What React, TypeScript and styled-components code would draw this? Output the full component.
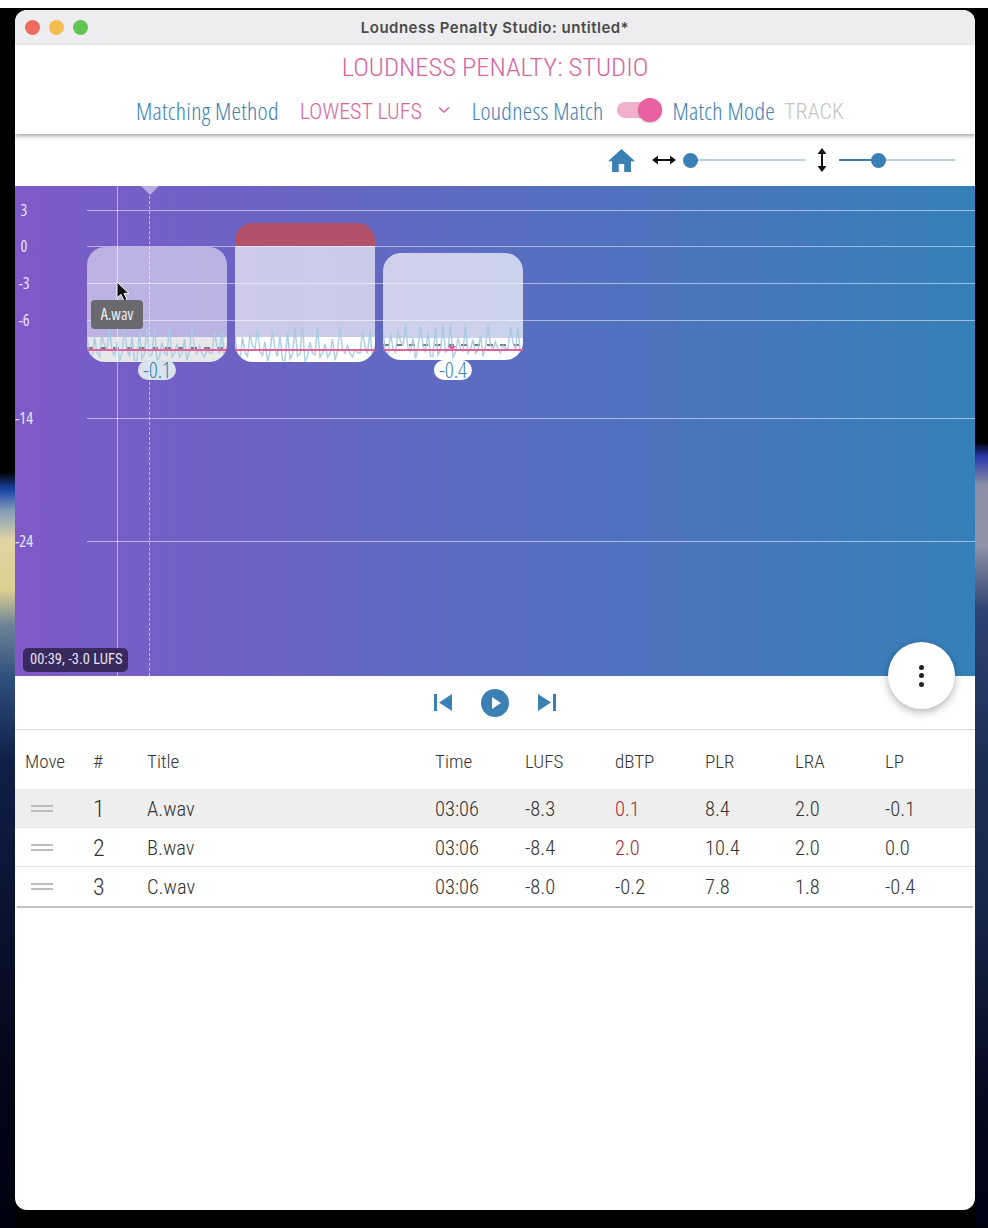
import styled, { createGlobalStyle } from "styled-components";

const BLUE = "#3a80b5";
const PINK = "#d9659f";
const NARROW = `"Roboto Condensed", "Open Sans", sans-serif`;

const GlobalStyle = createGlobalStyle`
  html, body { margin: 0; padding: 0; background: #010210; }
  #root { width: 988px; height: 1228px; overflow: hidden; }
`;

const Desktop = styled.div`
  position: relative;
  width: 988px;
  height: 1228px;
  box-sizing: border-box;
  padding: 10px 13px 18px 15px;
  background-color: #000;
  background-repeat: no-repeat;
  background-size: 15px 100%, 13px 100%;
  background-position: left top, right top;
  background-image: linear-gradient(
      180deg,
      #000 0,
      #000 472px,
      #1c45a8 490px,
      #7f9ab8 510px,
      #e0d4a4 540px,
      #dccf90 590px,
      #6d8398 625px,
      #2d4e7c 680px,
      #101f48 760px,
      #0a1332 900px,
      #030514 1100px,
      #010210 1228px
    ),
    linear-gradient(
      180deg,
      #000 0,
      #000 442px,
      #2636a6 456px,
      #8b8ea6 485px,
      #8f94a8 545px,
      #2e4272 610px,
      #1c2d55 760px,
      #17264c 900px,
      #060b22 1080px,
      #010210 1228px
    );
`;

const TopStrip = styled.div`
  position: absolute;
  left: 0;
  right: 0;
  top: 0;
  height: 8px;
  background: #fff;
`;

const Window = styled.div`
  position: relative;
  display: flex;
  flex-direction: column;
  height: 100%;
  background: #fff;
  border-radius: 12px;
  overflow: hidden;
  font-family: "Open Sans", sans-serif;
  font-stretch: 75%;
  font-weight: 350;
`;

const TitleBar = styled.div`
  position: relative;
  display: flex;
  align-items: center;
  justify-content: center;
  height: 35px;
  flex: none;
  background: #ededef;
  font-family: "Inter", sans-serif;
  font-stretch: 100%;
  font-size: 15px;
  letter-spacing: 0.5px;
  font-weight: 600;
  color: #4a4a4a;
`;

const Lights = styled.div`
  position: absolute;
  left: 10px;
  top: 10px;
  display: flex;
  gap: 9px;
`;

const Light = styled.span<{ $c: string }>`
  width: 15px;
  height: 15px;
  border-radius: 50%;
  background: ${(p) => p.$c};
`;

const Header = styled.header`
  position: relative;
  z-index: 2;
  display: flex;
  flex-direction: column;
  align-items: center;
  height: 89px;
  flex: none;
  background: #fff;
  box-shadow: 0 2px 4px rgba(0, 0, 0, 0.35);
`;

const AppName = styled.h1`
  margin: 3px 0 0;
  font-family: ${NARROW};
  font-size: 26.5px;
  line-height: 38px;
  font-weight: 300;
  color: ${PINK};
`;

const Controls = styled.div`
  display: flex;
  align-items: center;
  height: 34px;
  margin-top: 7px;
  padding-right: 10px;
  font-size: 24px;
  white-space: nowrap;
`;

const Label = styled.span`
  color: ${BLUE};
  letter-spacing: 0.27px;
`;

const Method = styled.span`
  font-family: ${NARROW};
  font-size: 22px;
  font-weight: 300;
  padding-top: 3px;
  color: ${PINK};
  margin: 0 16px 0 21px;
`;

const Chevron = styled.svg`
  margin-right: 22px;
`;

const Track = styled.span`
  font-family: ${NARROW};
  font-size: 22px;
  font-weight: 300;
  padding-top: 3px;
  color: #c4c4c4;
  margin-left: 9px;
`;

const Toggle = styled.span`
  position: relative;
  flex: none;
  width: 45px;
  height: 16px;
  margin: 0 10px 0 14px;
  border-radius: 8px;
  background: #f1b0cd;
`;

const Knob = styled.span`
  position: absolute;
  right: 0;
  top: -4px;
  width: 24px;
  height: 24px;
  border-radius: 50%;
  background: #e8609f;
  box-shadow: 0 1px 2px rgba(0, 0, 0, 0.25);
`;

const ZoomBar = styled.div`
  display: flex;
  align-items: center;
  justify-content: flex-end;
  height: 52px;
  flex: none;
  padding-right: 20px;
`;

const HomeIcon = styled.svg`
  margin-right: 17px;
`;

const HorizontalIcon = styled.svg`
  margin-right: 7px;
`;

const VerticalIcon = styled.svg`
  margin: 0 12px;
`;

const Slider = styled.div<{ $w: number }>`
  position: relative;
  width: ${(p) => p.$w}px;
  height: 2px;
  background: #b4d0e5;
`;

const SliderFill = styled.div<{ $w: number }>`
  width: ${(p) => p.$w}px;
  height: 2px;
  background: ${BLUE};
`;

const Thumb = styled.span<{ $at: number }>`
  position: absolute;
  top: -6.5px;
  left: ${(p) => p.$at}px;
  width: 15px;
  height: 15px;
  margin-left: -7.5px;
  border-radius: 50%;
  background: ${BLUE};
`;

const Chart = styled.div`
  position: relative;
  height: 490px;
  flex: none;
  overflow: hidden;
  background: linear-gradient(90deg, #7e5ac8 0%, #3580b8 100%);
`;

const GridLine = styled.div<{ $top: number }>`
  position: absolute;
  left: 72px;
  right: 0;
  top: ${(p) => p.$top}px;
  height: 1px;
  background: rgba(255, 255, 255, 0.5);
`;

const Tick = styled.span<{ $top: number }>`
  position: absolute;
  left: -1px;
  top: ${(p) => p.$top - 10}px;
  width: 20px;
  text-align: center;
  font-size: 16px;
  line-height: 20px;
  font-weight: 400;
  color: #e9e4f6;
`;

const ClipWrap = styled.div<{ $left: number; $top: number; $h: number }>`
  position: absolute;
  left: ${(p) => p.$left}px;
  top: ${(p) => p.$top}px;
  width: 140px;
  height: ${(p) => p.$h}px;
`;

const ClipBox = styled.div`
  position: relative;
  display: flex;
  flex-direction: column;
  height: 100%;
  border-radius: 18px;
  overflow: hidden;
`;

const ClipOver = styled.div`
  height: 23px;
  flex: none;
  background: #b25269;
`;

const ClipFill = styled.div<{ $alpha: number }>`
  flex: 1;
  background: rgba(255, 255, 255, ${(p) => p.$alpha});
`;

const ClipBase = styled.div<{ $h: number; $dim?: boolean }>`
  height: ${(p) => p.$h}px;
  flex: none;
  background: ${(p) => (p.$dim ? "#e8e8ea" : "#fff")};
`;

const Wave = styled.svg`
  position: absolute;
  left: 0;
  bottom: 0;
`;

const Ceiling = styled.div<{ $bottom: number }>`
  position: absolute;
  left: 0;
  right: 0;
  bottom: ${(p) => p.$bottom}px;
  height: 2px;
  background: repeating-linear-gradient(90deg, #77777c 0 6px, transparent 6px 13px);
`;

const Target = styled.div<{ $bottom: number }>`
  position: absolute;
  left: 0;
  right: 0;
  bottom: ${(p) => p.$bottom}px;
  height: 2.5px;
  background: #e0609c;
`;

const TargetMark = styled.span`
  position: absolute;
  left: 65px;
  top: -3px;
  border-left: 4px solid transparent;
  border-right: 4px solid transparent;
  border-top: 5px solid #e0609c;
`;

const Badge = styled.span<{ $top: number; $dim?: boolean }>`
  position: absolute;
  left: 50%;
  top: ${(p) => p.$top}px;
  transform: translateX(-50%);
  padding: 0 5px;
  height: 20px;
  line-height: 19px;
  border-radius: 10px;
  background: ${(p) => (p.$dim ? "#d7e2ea" : "#fff")};
  font-size: 22px;
  color: ${BLUE};
`;

const Tooltip = styled.div`
  position: absolute;
  left: 76px;
  top: 114px;
  width: 52px;
  height: 29px;
  line-height: 29px;
  border-radius: 4px;
  text-align: center;
  background: #6a6a6e;
  color: #eee;
  font-size: 16px;
  font-weight: 400;
`;

const Status = styled.div`
  position: absolute;
  left: 8px;
  bottom: 4px;
  height: 24px;
  padding: 0 6px 0 7px;
  line-height: 24px;
  border-radius: 5px;
  background: #39295f;
  color: #e6e3ee;
  font-family: ${NARROW};
  font-size: 14.5px;
  font-weight: 400;
`;

const Crosshair = styled.div`
  position: absolute;
  left: 102px;
  top: 0;
  bottom: 0;
  width: 1px;
  background: rgba(255, 255, 255, 0.5);
`;

const Playhead = styled.div`
  position: absolute;
  left: 134px;
  top: 0;
  bottom: 0;
  border-left: 1px dashed rgba(255, 255, 255, 0.6);
`;

const PlayheadCap = styled.span`
  position: absolute;
  left: 126px;
  top: 0;
  border-left: 9px solid transparent;
  border-right: 9px solid transparent;
  border-top: 9px solid #b9a9e0;
`;

const Cursor = styled.svg`
  position: absolute;
  left: 101px;
  top: 95px;
`;

const Fab = styled.button`
  position: absolute;
  z-index: 3;
  right: 20px;
  top: 632px;
  display: flex;
  flex-direction: column;
  align-items: center;
  justify-content: center;
  gap: 3.5px;
  width: 67px;
  height: 67px;
  padding: 0;
  border: none;
  border-radius: 50%;
  background: #fff;
  box-shadow: 0 3px 8px rgba(0, 0, 0, 0.3);
`;

const FabDot = styled.span`
  width: 5px;
  height: 5px;
  border-radius: 50%;
  background: #222;
`;

const Transport = styled.div`
  display: flex;
  align-items: center;
  justify-content: center;
  gap: 29px;
  height: 54px;
  box-sizing: border-box;
  flex: none;
  border-bottom: 1px solid #ddd;
`;

const Table = styled.div`
  display: flex;
  flex-direction: column;
  flex: none;
  font-family: ${NARROW};
  font-weight: 300;
  &::after {
    content: "";
    height: 2px;
    margin: -1px 2px 0;
    background: #c2c2c2;
  }
`;

const COLS = "68px 54px 288px 90px 90px 90px 90px 90px 1fr";

const HeadRow = styled.div`
  display: grid;
  grid-template-columns: ${COLS};
  align-items: center;
  height: 59px;
  box-sizing: border-box;
  padding: 4px 0 0 10px;
  font-size: 19px;
  color: #333;
`;

const Row = styled.div<{ $on?: boolean }>`
  display: grid;
  grid-template-columns: ${COLS};
  align-items: center;
  height: 39px;
  box-sizing: border-box;
  padding: 2px 0 0 10px;
  border-bottom: 1px solid #e3e3e3;
  background: ${(p) => (p.$on ? "#eeeeee" : "#fff")};
  font-size: 20.5px;
  color: #333;
  &:last-child {
    border-bottom: none;
    height: 40px;
    padding-top: 0;
  }
`;

const Handle = styled.span`
  width: 22px;
  height: 3px;
  margin: -2px 0 0 6px;
  border-top: 2px solid #bdbdbd;
  border-bottom: 2px solid #bdbdbd;
`;

const RowNo = styled.span`
  font-size: 24px;
`;

const Cell = styled.span<{ $hot?: boolean }>`
  color: ${(p) => (p.$hot ? "#a82c38" : "inherit")};
`;

const ticks = [
  { label: "3", y: 24 },
  { label: "0", y: 60 },
  { label: "-3", y: 97 },
  { label: "-6", y: 134 },
  { label: "-14", y: 232 },
  { label: "-24", y: 355 },
];

const headings = ["Move", "#", "Title", "Time", "LUFS", "dBTP", "PLR", "LRA", "LP"];

const tracks = [
  { n: 1, title: "A.wav", lufs: "-8.3", dbtp: "0.1", hot: true, plr: "8.4", lra: "2.0", lp: "-0.1" },
  { n: 2, title: "B.wav", lufs: "-8.4", dbtp: "2.0", hot: true, plr: "10.4", lra: "2.0", lp: "0.0" },
  { n: 3, title: "C.wav", lufs: "-8.0", dbtp: "-0.2", hot: false, plr: "7.8", lra: "1.8", lp: "-0.4" },
];

// deterministic noise, so the wave form is the same on every load
function wavePoints(seed: number, offset: number) {
  const pts: string[] = [];
  for (let i = 0; i <= 56; i++) {
    const r = Math.abs(Math.sin((i + seed) * 12.9898) * 43758.5453) % 1;
    const swell = Math.sin(i * 0.7) * 4;
    const y = 23 + (i % 3 === 0 ? -r * 24 : r * 13) + swell + offset;
    pts.push(`${(i * 2.5).toFixed(1)},${Math.max(1, Math.min(35, y)).toFixed(1)}`);
  }
  return pts.join(" ");
}

function Waveform({ seed, offset = 0 }: { seed: number; offset?: number }) {
  return (
    <Wave width="140" height="36" viewBox="0 0 140 36">
      <polyline
        points={wavePoints(seed, offset)}
        fill="none"
        stroke="#a5cbe2"
        strokeOpacity="0.9"
        strokeWidth="1.5"
      />
    </Wave>
  );
}

function App() {
  return (
    <Desktop>
      <GlobalStyle />
      <TopStrip />
      <Window>
        <TitleBar>
          <Lights>
            <Light $c="#ee6a5e" />
            <Light $c="#f4bd4f" />
            <Light $c="#61c554" />
          </Lights>
          Loudness Penalty Studio: untitled*
        </TitleBar>
        <Header>
          <AppName>LOUDNESS PENALTY: STUDIO</AppName>
          <Controls>
            <Label>Matching Method</Label>
            <Method>LOWEST LUFS</Method>
            <Chevron width="12" height="8" viewBox="0 0 12 8">
              <path d="M1 1.5 6 6l5-4.5" fill="none" stroke={PINK} strokeWidth="1.5" />
            </Chevron>
            <Label>Loudness Match</Label>
            <Toggle>
              <Knob />
            </Toggle>
            <Label>Match Mode</Label>
            <Track>TRACK</Track>
          </Controls>
        </Header>
        <ZoomBar>
          <HomeIcon width="27" height="23" viewBox="2 3 20 17" fill={BLUE}>
            <path d="M10 20v-6h4v6h5v-8h3L12 3 2 12h3v8z" />
          </HomeIcon>
          <HorizontalIcon width="24" height="10" viewBox="0 0 24 10">
            <path d="M0 5l6-4.5v3.5h12V.5L24 5l-6 4.5V6H6v3.5z" fill="#111" />
          </HorizontalIcon>
          <Slider $w={122}>
            <Thumb $at={7} />
          </Slider>
          <VerticalIcon width="10" height="24" viewBox="0 0 10 24">
            <path d="M5 0l4.5 6H6v12h3.5L5 24 .5 18H4V6H.5z" fill="#111" />
          </VerticalIcon>
          <Slider $w={116}>
            <SliderFill $w={39} />
            <Thumb $at={39} />
          </Slider>
        </ZoomBar>
        <Chart>
          {ticks.map((t) => (
            <Tick key={t.label} $top={t.y}>
              {t.label}
            </Tick>
          ))}
          {ticks.map((t) => (
            <GridLine key={t.label} $top={t.y} />
          ))}
          <ClipWrap $left={72} $top={61} $h={115}>
            <ClipBox>
              <ClipFill $alpha={0.52} />
              <ClipBase $h={25} $dim />
              <Ceiling $bottom={13} />
              <Waveform seed={3} />
            </ClipBox>
            <Target $bottom={11} />
            <Badge $top={113} $dim>
              -0.1
            </Badge>
          </ClipWrap>
          <ClipWrap $left={220} $top={37} $h={139}>
            <ClipBox>
              <ClipOver />
              <ClipFill $alpha={0.66} />
              <ClipBase $h={25} />
              <Waveform seed={3} />
            </ClipBox>
            <Target $bottom={11} />
          </ClipWrap>
          <ClipWrap $left={368} $top={67} $h={107}>
            <ClipBox>
              <ClipFill $alpha={0.69} />
              <ClipBase $h={22} />
              <Ceiling $bottom={14} />
              <Waveform seed={3} offset={-2} />
            </ClipBox>
            <Target $bottom={9}>
              <TargetMark />
            </Target>
            <Badge $top={107}>-0.4</Badge>
          </ClipWrap>
          <Crosshair />
          <Playhead />
          <PlayheadCap />
          <Cursor width="14" height="22" viewBox="0 0 14 22">
            <path d="M1 1v16l4-3.6L8 20l3-1.4-3-6.2h5z" fill="#111" stroke="#fff" strokeWidth="1" />
          </Cursor>
          <Tooltip>A.wav</Tooltip>
          <Status>00:39, -3.0 LUFS</Status>
        </Chart>
        <Fab aria-label="More">
          <FabDot />
          <FabDot />
          <FabDot />
        </Fab>
        <Transport>
          <svg width="18" height="17" viewBox="0 0 18 17" fill={BLUE}>
            <path d="M0 0h3v17H0zM18 0v17L5 8.5z" />
          </svg>
          <svg width="28" height="28" viewBox="0 0 28 28">
            <circle cx="14" cy="14" r="14" fill={BLUE} />
            <path d="M11 8l9 6-9 6z" fill="#fff" />
          </svg>
          <svg width="18" height="17" viewBox="0 0 18 17" fill={BLUE}>
            <path d="M18 0h-3v17h3zM0 0v17l13-8.5z" />
          </svg>
        </Transport>
        <Table>
          <HeadRow>
            {headings.map((h) => (
              <span key={h}>{h}</span>
            ))}
          </HeadRow>
          {tracks.map((t) => (
            <Row key={t.n} $on={t.n === 1}>
              <Handle />
              <RowNo>{t.n}</RowNo>
              <Cell>{t.title}</Cell>
              <Cell>03:06</Cell>
              <Cell>{t.lufs}</Cell>
              <Cell $hot={t.hot}>{t.dbtp}</Cell>
              <Cell>{t.plr}</Cell>
              <Cell>{t.lra}</Cell>
              <Cell>{t.lp}</Cell>
            </Row>
          ))}
        </Table>
      </Window>
    </Desktop>
  );
}

export default App;
